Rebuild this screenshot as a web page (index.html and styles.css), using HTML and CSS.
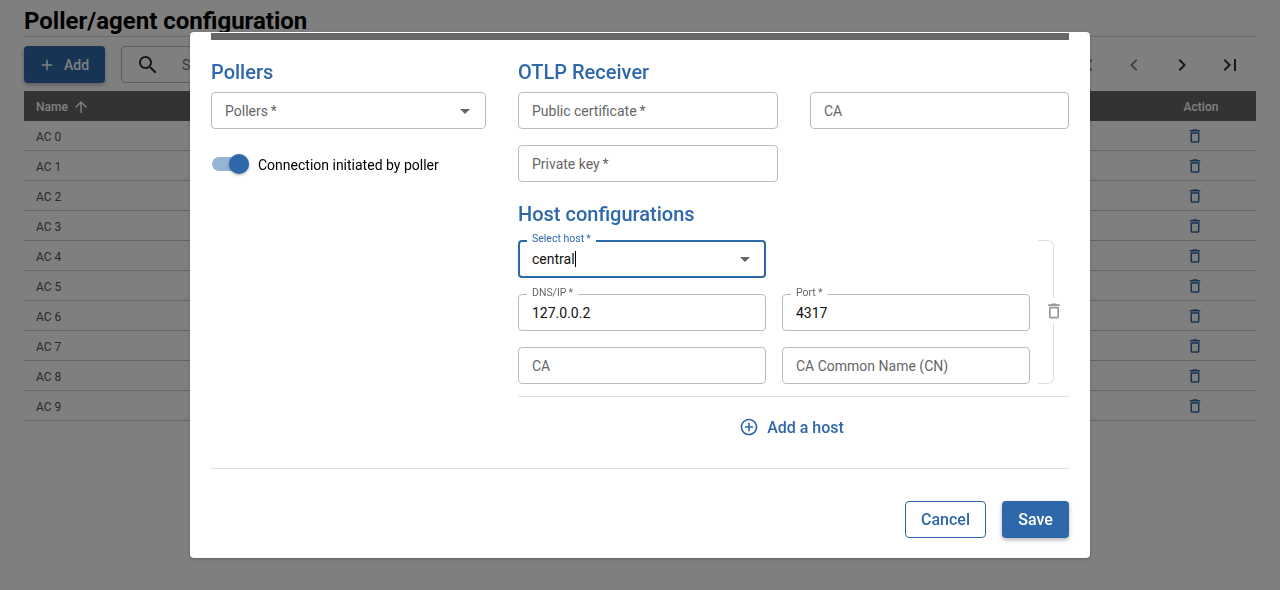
FILE: index.html
```html
<!DOCTYPE html>
<html lang="en">
<head>
    <meta charset="UTF-8">
    <meta name="viewport" content="width=device-width, initial-scale=1.0">
    <title>Poller/agent configuration</title>
    <link rel="stylesheet" href="styles.css">
</head>
<body>

    <svg class="icon-defs" width="0" height="0">
        <symbol id="i-trash" viewBox="0 0 24 24"><path d="M6 19c0 1.1.9 2 2 2h8c1.1 0 2-.9 2-2V7H6v12zM8 9h8v10H8V9zm7.5-5-1-1h-5l-1 1H5v2h14V4h-3.5z"/></symbol>
        <symbol id="i-drop" viewBox="0 0 24 24"><path d="M7 10l5 5 5-5z"/></symbol>
    </svg>

    <div class="page">
        <h1 class="page-title">Poller/agent configuration</h1>

        <div class="toolbar">
            <button class="add-button">
                <svg viewBox="0 0 24 24" width="18" height="18"><path d="M19 13h-6v6h-2v-6H5v-2h6V5h2v6h6v2z"/></svg>
                Add
            </button>
            <div class="search">
                <svg viewBox="0 0 24 24" width="24" height="24"><path d="M15.5 14h-.79l-.28-.27C15.41 12.59 16 11.11 16 9.5 16 5.91 13.09 3 9.5 3S3 5.91 3 9.5 5.91 16 9.5 16c1.61 0 3.09-.59 4.23-1.57l.27.28v.79l5 4.99L20.49 19l-4.99-5zm-6 0C7.01 14 5 11.99 5 9.5S7.01 5 9.5 5 14 7.01 14 9.5 11.99 14 9.5 14z"/></svg>
                <span>Search</span>
            </div>
            <div class="pager">
                <svg class="disabled" viewBox="0 0 24 24" width="24" height="24"><path d="M18.41 16.59 13.83 12l4.58-4.59L17 6l-6 6 6 6zM6 6h2v12H6z"/></svg>
                <svg class="disabled" viewBox="0 0 24 24" width="24" height="24"><path d="M15.41 7.41 14 6l-6 6 6 6 1.41-1.41L10.83 12z"/></svg>
                <svg viewBox="0 0 24 24" width="24" height="24"><path d="M10 6 8.59 7.41 13.17 12l-4.58 4.59L10 18l6-6z"/></svg>
                <svg viewBox="0 0 24 24" width="24" height="24"><path d="M5.59 7.41 10.18 12l-4.59 4.59L7 18l6-6-6-6zM16 6h2v12h-2z"/></svg>
            </div>
        </div>

        <div class="table">
            <div class="table-head">
                <span class="name-head">
                    Name
                    <svg viewBox="0 0 24 24" width="18" height="18"><path d="M4 12l1.41 1.41L11 7.83V20h2V7.83l5.58 5.59L20 12l-8-8-8 8z"/></svg>
                </span>
                <span class="action-col">Action</span>
            </div>
            <div class="table-row"><span>AC 0</span><span class="action-col"><svg><use href="#i-trash"/></svg></span></div>
            <div class="table-row"><span>AC 1</span><span class="action-col"><svg><use href="#i-trash"/></svg></span></div>
            <div class="table-row"><span>AC 2</span><span class="action-col"><svg><use href="#i-trash"/></svg></span></div>
            <div class="table-row"><span>AC 3</span><span class="action-col"><svg><use href="#i-trash"/></svg></span></div>
            <div class="table-row"><span>AC 4</span><span class="action-col"><svg><use href="#i-trash"/></svg></span></div>
            <div class="table-row"><span>AC 5</span><span class="action-col"><svg><use href="#i-trash"/></svg></span></div>
            <div class="table-row"><span>AC 6</span><span class="action-col"><svg><use href="#i-trash"/></svg></span></div>
            <div class="table-row"><span>AC 7</span><span class="action-col"><svg><use href="#i-trash"/></svg></span></div>
            <div class="table-row"><span>AC 8</span><span class="action-col"><svg><use href="#i-trash"/></svg></span></div>
            <div class="table-row"><span>AC 9</span><span class="action-col"><svg><use href="#i-trash"/></svg></span></div>
        </div>
    </div>

    <div class="backdrop">
        <div class="modal">
            <div class="modal-strip"></div>

            <div class="modal-columns">
                <div class="col-left">
                    <h2 class="section-title">Pollers</h2>
                    <div class="field">
                        <span class="placeholder">Pollers&thinsp;*</span>
                        <svg class="drop"><use href="#i-drop"/></svg>
                    </div>
                    <div class="switch-row">
                        <span class="switch"><span class="switch-thumb"></span></span>
                        <span>Connection initiated by poller</span>
                    </div>
                </div>

                <div class="col-right">
                    <h2 class="section-title">OTLP Receiver</h2>
                    <div class="otlp-grid">
                        <div class="field"><span class="placeholder">Public certificate&thinsp;*</span></div>
                        <div class="field"><span class="placeholder">CA</span></div>
                        <div class="field"><span class="placeholder">Private key&thinsp;*</span></div>
                    </div>

                    <h2 class="section-title host-title">Host configurations</h2>
                    <div class="host-block">
                        <div class="host-grid">
                            <div class="field focused">
                                <label class="float-label">Select host&thinsp;*</label>
                                <span class="value">central<span class="caret"></span></span>
                                <svg class="drop"><use href="#i-drop"/></svg>
                            </div>
                            <div></div>
                            <div class="field">
                                <label class="float-label">DNS/IP&thinsp;*</label>
                                <span class="value">127.0.0.2</span>
                            </div>
                            <div class="field">
                                <label class="float-label">Port&thinsp;*</label>
                                <span class="value">4317</span>
                            </div>
                            <div class="field"><span class="placeholder">CA</span></div>
                            <div class="field"><span class="placeholder">CA Common Name (CN)</span></div>
                        </div>
                        <div class="host-bracket">
                            <svg class="host-delete"><use href="#i-trash"/></svg>
                        </div>
                    </div>

                    <div class="add-host">
                        <svg viewBox="0 0 24 24" width="20" height="20"><path d="M13 7h-2v4H7v2h4v4h2v-4h4v-2h-4V7zm-1-5C6.49 2 2 6.49 2 12s4.49 10 10 10 10-4.49 10-10S17.51 2 12 2zm0 18c-4.41 0-8-3.59-8-8s3.59-8 8-8 8 3.59 8 8-3.59 8-8 8z"/></svg>
                        Add a host
                    </div>
                </div>
            </div>

            <div class="modal-actions">
                <button class="btn-outline">Cancel</button>
                <button class="btn-solid">Save</button>
            </div>
        </div>
    </div>

</body>
</html>
```

FILE: styles.css
```css
* {
    box-sizing: border-box;
}

body {
    margin: 0;
    height: 590px;
    overflow: hidden;
    font-family: Roboto, Arial, sans-serif;
    font-size: 14px;
    color: #000;
    background: #fff;
}

.icon-defs {
    position: absolute;
}

button {
    font-family: inherit;
    cursor: pointer;
}

/* page behind the dialog */
.page {
    padding: 0 24px;
}

.page-title {
    margin: 0;
    height: 37px;
    padding-top: 7px;
    font-size: 24px;
    line-height: 28px;
    font-weight: 700;
    border-bottom: 1px solid #d8d8d8;
}

.toolbar {
    display: flex;
    align-items: center;
    gap: 16px;
    margin-top: 9px;
    height: 37px;
}

.add-button {
    display: flex;
    align-items: center;
    gap: 8px;
    width: 81px;
    height: 37px;
    padding: 0 0 0 14px;
    border: 0;
    border-radius: 4px;
    background: #2e68aa;
    color: #fff;
    fill: #fff;
    font-size: 14px;
    font-weight: 500;
    box-shadow: 0 2px 4px rgba(0, 0, 0, 0.3);
}

.search {
    display: flex;
    align-items: center;
    gap: 22px;
    width: 80px;
    height: 37px;
    padding-left: 14px;
    overflow: hidden;
    border: 1px solid #bbb;
    border-radius: 4px;
    color: #777;
    fill: #333;
}

.search svg,
.search span {
    flex: none;
}

.pager {
    display: flex;
    gap: 24px;
    margin-left: auto;
    margin-right: 14px;
    fill: #333;
}

.pager .disabled {
    fill: #888;
}

.table {
    margin-top: 8px;
}

.table-head {
    display: flex;
    align-items: center;
    justify-content: space-between;
    height: 30px;
    padding: 1px 0 0 12px;
    background: #666;
    color: #fff;
    font-size: 12px;
    font-weight: 500;
}

.name-head {
    display: flex;
    align-items: center;
    gap: 4px;
    fill: #fff;
}

.table-row {
    display: flex;
    align-items: center;
    justify-content: space-between;
    height: 30px;
    padding-left: 12px;
    border-bottom: 1px solid #ccc;
    font-size: 12px;
    color: #555;
}

.table-row > span:first-child {
    padding-top: 2px;
}

.action-col {
    display: flex;
    justify-content: center;
    width: 110px;
}

.action-col svg {
    width: 18px;
    height: 18px;
    margin-right: 12px;
    fill: #2e68aa;
}

/* dialog */
.backdrop {
    position: fixed;
    inset: 0;
    display: flex;
    align-items: center;
    justify-content: center;
    background: rgba(0, 0, 0, 0.5);
}

.modal {
    width: 900px;
    height: 526px;
    padding: 1px 21px 0;
    background: #fff;
    border-radius: 4px;
    box-shadow: 0 1px 3px rgba(0, 0, 0, 0.25);
}

.modal-strip {
    height: 7px;
    background: #666;
}

.modal-columns {
    display: flex;
    gap: 32px;
    padding-bottom: 29px;
    border-bottom: 1px solid #e0e0e0;
}

.col-left {
    width: 275px;
}

.col-right {
    width: 551px;
}

.section-title {
    margin: 20px 0 8px;
    height: 24px;
    font-size: 20px;
    line-height: 24px;
    font-weight: 500;
    color: #2e68aa;
}

.host-title {
    margin: 20px 0 14px;
}

.field {
    position: relative;
    display: flex;
    align-items: center;
    justify-content: space-between;
    height: 37px;
    padding: 0 13px;
    border: 1px solid #bdbdbd;
    border-radius: 4px;
    background: #fff;
}

.field.focused {
    height: 38px;
    padding: 0 12px;
    border: 2px solid #2e68aa;
}

.placeholder {
    color: #666;
}

.value {
    color: #111;
}

.caret {
    display: inline-block;
    width: 1px;
    height: 16px;
    margin-bottom: -3px;
    background: #000;
}

.float-label {
    position: absolute;
    top: -8px;
    left: 8px;
    padding: 0 5px;
    background: #fff;
    font-size: 10.5px;
    line-height: 12px;
    color: #666;
}

.focused .float-label {
    top: -9px;
    left: 7px;
    color: #2e68aa;
}

.drop {
    width: 24px;
    height: 24px;
    margin-right: -5px;
    fill: #666;
}

.switch-row {
    display: flex;
    align-items: center;
    gap: 8px;
    margin-top: 25px;
    height: 22px;
}

.switch {
    position: relative;
    width: 37px;
    height: 14px;
    margin: -2px 1px 0 1px;
    border-radius: 7px;
    background: #97b3d5;
}

.switch-thumb {
    position: absolute;
    top: -3px;
    right: 0;
    width: 20px;
    height: 20px;
    border-radius: 50%;
    background: #2e68aa;
    box-shadow: 0 1px 3px rgba(0, 0, 0, 0.35);
}

.otlp-grid {
    display: grid;
    grid-template-columns: 260px 259px;
    gap: 16px 32px;
}

.host-block {
    display: flex;
    gap: 8px;
    padding-bottom: 12px;
    border-bottom: 1px solid #e0e0e0;
}

.host-grid {
    display: grid;
    grid-template-columns: 248px 248px;
    grid-template-rows: 38px 37px 37px;
    gap: 16px;
}

.host-bracket {
    position: relative;
    width: 16px;
    height: 144px;
    border: 1px solid #e0e0e0;
    border-left: 0;
    border-radius: 0 6px 6px 0;
}

.host-delete {
    position: absolute;
    top: 58px;
    left: 6px;
    width: 20px;
    height: 24px;
    padding: 2px 0;
    background: #fff;
    fill: #999;
}

.add-host {
    display: flex;
    align-items: center;
    justify-content: center;
    gap: 8px;
    margin-top: 18px;
    height: 24px;
    padding-right: 4px;
    font-size: 16px;
    font-weight: 500;
    color: #2e68aa;
    fill: #2e68aa;
}

.modal-actions {
    display: flex;
    justify-content: flex-end;
    gap: 16px;
    margin-top: 32px;
}

.btn-outline,
.btn-solid {
    height: 37px;
    border-radius: 4px;
    font-size: 16px;
    font-weight: 500;
}

.btn-outline {
    width: 81px;
    border: 1px solid #2e68aa;
    background: #fff;
    color: #2e68aa;
}

.btn-solid {
    width: 67px;
    border: 0;
    background: #2e68aa;
    color: #fff;
    box-shadow: 0 2px 4px rgba(0, 0, 0, 0.3);
}
```
